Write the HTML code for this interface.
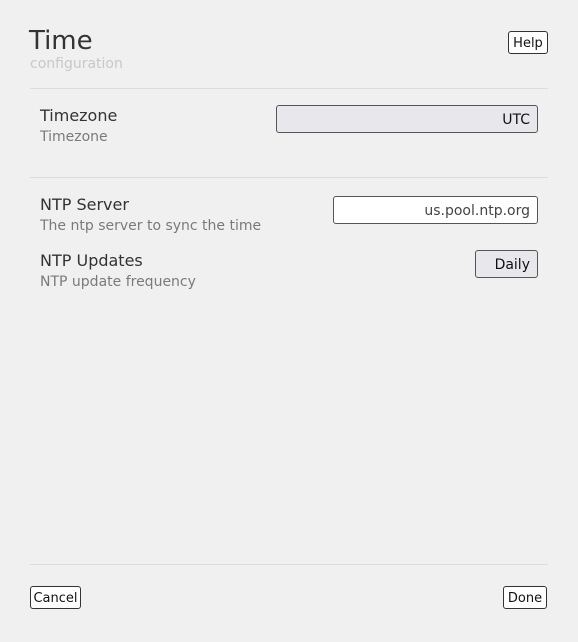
<!DOCTYPE html>
<html><head><style>
body{margin:0;width:578px;height:642px;background:#f0f0f0;font-family:"DejaVu Sans","Liberation Sans",sans-serif;position:relative;overflow:hidden}
div,span{position:absolute;white-space:nowrap}
.hr{height:1px;background:#dcdcdc;left:30px;width:518px}
.l{left:40px;font-size:16px;color:#333}
.s{left:40px;font-size:14px;color:#7a7a7a}
.btn{border:1px solid #333;border-radius:3px;background:#fff;font-size:13px;color:#111;text-align:center;box-sizing:border-box}
.box{border:1px solid #555;border-radius:3px;box-sizing:border-box;font-size:14px;text-align:right;padding-right:7px;color:#111}
</style></head><body>
<div style="left:29px;top:26px;font-size:26px;color:#333">Time</div>
<div style="left:30px;top:56px;font-size:14px;color:#c8c8c8">configuration</div>
<div class="btn" style="left:508px;top:31px;width:40px;height:23px;line-height:23px">Help</div>
<div class="hr" style="top:88px"></div>
<div class="l" style="top:106px">Timezone</div>
<div class="s" style="top:129px">Timezone</div>
<div class="box" style="left:276px;top:105px;width:262px;height:28px;line-height:28px;background:#e8e8ec">UTC</div>
<div class="hr" style="top:177px"></div>
<div class="l" style="top:195px">NTP Server</div>
<div class="s" style="top:218px">The ntp server to sync the time</div>
<div class="box" style="left:333px;top:196px;width:205px;height:28px;line-height:28px;background:#fff;color:#444">us.pool.ntp.org</div>
<div class="l" style="top:251px">NTP Updates</div>
<div class="s" style="top:274px">NTP update frequency</div>
<div class="box" style="left:475px;top:250px;width:63px;height:28px;line-height:28px;background:#e8e8ec">Daily</div>
<div class="hr" style="top:564px"></div>
<div class="btn" style="left:30px;top:586px;width:51px;height:23px;line-height:23px">Cancel</div>
<div class="btn" style="left:503px;top:586px;width:44px;height:23px;line-height:23px">Done</div>
</body></html>
